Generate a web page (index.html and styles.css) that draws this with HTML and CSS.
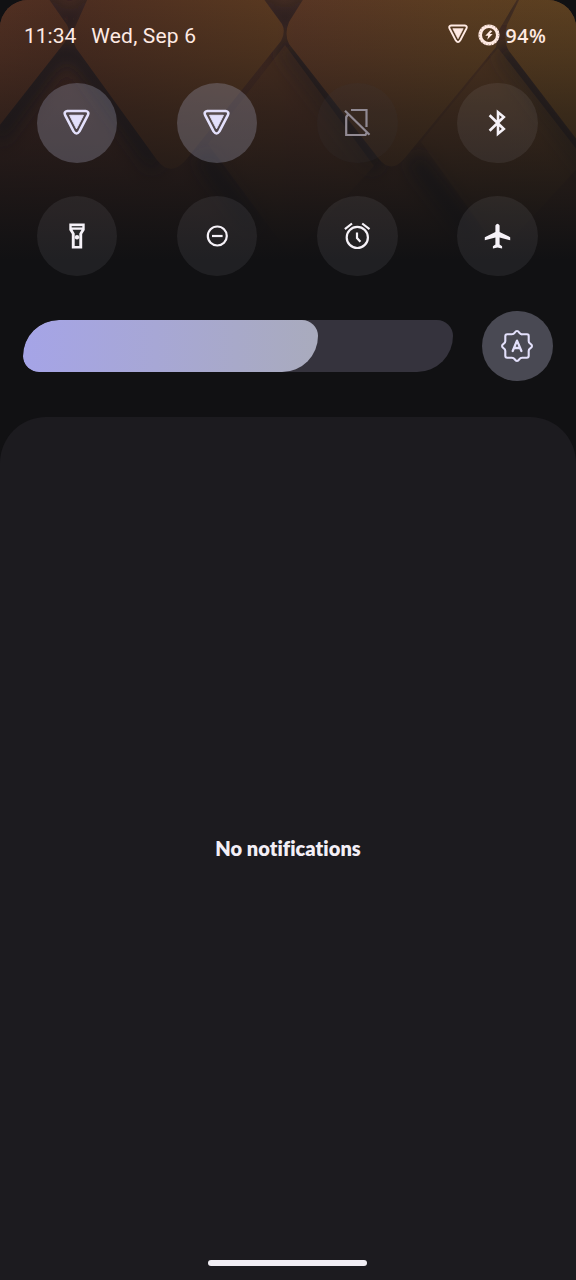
FILE: index.html
```html
<!DOCTYPE html>
<html lang="en">
<head>
<meta charset="utf-8">
<title>Quick settings</title>
<link rel="stylesheet" href="styles.css">
</head>
<body>
<main class="shade">
  <svg class="wallpaper" viewBox="0 0 576 280" aria-hidden="true">
    <defs>
      <linearGradient id="warm" gradientUnits="userSpaceOnUse" x1="0" x2="576" y1="0" y2="0">
        <stop offset="0" stop-color="#482a22"/><stop offset=".48" stop-color="#4d2f24"/><stop offset=".75" stop-color="#523423"/><stop offset="1" stop-color="#543624"/>
      </linearGradient>
      <linearGradient id="diamond" gradientUnits="userSpaceOnUse" x1="0" x2="576" y1="0" y2="0">
        <stop offset="0" stop-color="#5a3424"/><stop offset=".13" stop-color="#543122"/><stop offset=".48" stop-color="#623e22"/><stop offset=".51" stop-color="#603a26"/><stop offset=".8" stop-color="#654323"/><stop offset="1" stop-color="#664622"/>
      </linearGradient>
      <linearGradient id="fade" x1="0" x2="0" y1="0" y2="1">
        <stop offset="0" stop-color="#111113" stop-opacity=".12"/><stop offset=".2" stop-color="#111113" stop-opacity=".3"/><stop offset=".4" stop-color="#111113" stop-opacity=".52"/><stop offset=".6" stop-color="#111113" stop-opacity=".7"/><stop offset=".78" stop-color="#111113" stop-opacity=".87"/><stop offset=".93" stop-color="#111113"/>
      </linearGradient>
      <filter id="soft" x="-30%" y="-30%" width="160%" height="160%"><feGaussianBlur stdDeviation="9"/></filter>
    </defs>
    <rect width="576" height="280" fill="url(#warm)"/>
    <g fill="none" stroke="#1d1b24" stroke-width="20" opacity=".8" filter="url(#soft)">
      <path d="M65 44L-5 138M70 45L158 167M283 45L378 168M501 48L595 175M413 158L475 240M202 155L255 230"/>
      <path d="M46-5L70 28 92-5M262-5L285 26 306-5M512-5L500 25" stroke-width="9"/>
    </g>
    <g fill="url(#diamond)" opacity=".45">
      <path d="M421 142L498 48 585 160 500 252Z"/>
      <path d="M208 144L285 45 374 166 291 256Z"/>
    </g>
    <g fill="url(#diamond)">
      <path d="M-40-5H46L67 25Q71 32 65 42L-12 140-60 80Z"/>
      <path d="M88-2H263L282 24Q286 32 281 41L185 161Q170 177 157 160L76 48Q70 36 76 25Z"/>
      <path d="M304-2H518L499 30 496 47 404 159Q391 174 379 159L289 44Q284 34 289 22Z"/>
      <path d="M520-2H600V170L509 51Q503 42 507 25Z"/>
    </g>
    <rect width="576" height="280" fill="url(#fade)"/>
  </svg>

  <header class="status">
    <span class="clock">11:34</span>
    <span class="date">Wed, Sep 6</span>
    <svg class="status-wifi" viewBox="0 0 28 28"><use href="#wifi"/></svg>
    <svg class="battery" viewBox="0 0 22 22">
      <circle cx="11" cy="11" r="8.8" fill="none" stroke="currentColor" stroke-width="3.6"/>
      <circle cx="11" cy="11" r="9.8" fill="none" stroke="#6b4c3b" stroke-width="1.2" stroke-dasharray=".7 2.4" opacity=".6"/>
      <path d="M12.4 6.2L7.3 11.8H10.2L9.2 15.8 14.7 10.1H11.7L14.3 7.2Z" fill="currentColor"/>
    </svg>
    <span class="percent">94%</span>
  </header>

  <section class="tiles">
    <div class="tile on">
      <svg class="wifi" viewBox="0 0 28 28">
        <g id="wifi"><path d="M4.5 2H23.5Q27.4 2.6 25.8 6.3L17 23.2Q14 27.6 11 23.2L2.2 6.3Q.6 2.6 4.5 2Z" fill="none" stroke="currentColor" stroke-width="2.7" stroke-linejoin="round"/><path d="M6.8 6.5H21.2L14 20.6Z" fill="currentColor" stroke="currentColor" stroke-width="1" stroke-linejoin="round"/></g>
      </svg>
    </div>
    <div class="tile on"><svg class="wifi" viewBox="0 0 28 28"><use href="#wifi"/></svg></div>
    <div class="tile off">
      <svg class="sim" viewBox="0 0 28 30" fill="none" stroke="currentColor" stroke-width="2.2"><path d="M8 2H23.5V19M3.2 8.5V27H22.5L23.5 25M3.2 9L5 6.5M2 2.8L26.5 26.8"/></svg>
    </div>
    <div class="tile">
      <svg viewBox="0 0 28 28" fill="none" stroke="currentColor" stroke-width="2.6"><path d="M6.6 6.2L20.8 20 15 24.8V3.2L20.8 8 6.6 21.8"/></svg>
    </div>
    <div class="tile">
      <svg viewBox="0 0 28 28"><path d="M6.3 1.4H21.7V7.9L19.2 12V26.4H8.8V12L6.3 7.9Z" fill="currentColor"/><path d="M8.7 4.8H19.3" fill="none" stroke="#29292b" stroke-width="1.3"/><path d="M9.5 7.8H18.5L16.3 11.5V24H11.7V11.5Z" fill="#29292b"/><circle cx="14" cy="15.3" r="2.2" fill="currentColor"/></svg>
    </div>
    <div class="tile">
      <svg viewBox="0 0 28 28" fill="none" stroke="currentColor" stroke-width="2.2"><circle cx="14.3" cy="14" r="9.5"/><path d="M9 14H19.6"/></svg>
    </div>
    <div class="tile">
      <svg viewBox="0 0 28 28" fill="none" stroke="currentColor" stroke-width="2.2"><circle cx="14.3" cy="15.4" r="10.6"/><path d="M14 10.4V16L17.4 19.8M1.9 7.2L9 1.5M19.2 1.5L26.5 7.2"/></svg>
    </div>
    <div class="tile">
      <svg viewBox="0 0 28 28" fill="currentColor"><path d="M12.4 3.5Q14.5 .1 16.6 3.5V9.9L27.2 15.2V18.2L16.6 15.6V22.6L19.1 24.3V26.5L14.5 25.5 9.9 26.5V24.3L12.4 22.6V15.6L1.8 18.2V15.2L12.4 9.9Z"/></svg>
    </div>
  </section>

  <section class="brightness">
    <div class="track"><div class="level"></div></div>
    <div class="auto">
      <svg viewBox="0 0 34 34" fill="none" stroke="currentColor" stroke-width="2.1" stroke-linejoin="round" stroke-linecap="round"><path d="M14.6 3.8Q17 .3 19.4 3.8Q20.5 5.6 22.5 5.3H27Q28.8 5.3 28.7 7.2V11.5Q28.5 13.6 30.2 14.6Q33.8 17 30.2 19.4Q28.5 20.5 28.7 22.5V26.8Q28.7 28.7 26.8 28.7H22.5Q20.4 28.5 19.4 30.2Q17 33.8 14.6 30.2Q13.5 28.5 11.5 28.7H7.2Q5.3 28.7 5.3 26.8V22.5Q5.5 20.4 3.8 19.4Q.3 17 3.8 14.6Q5.5 13.5 5.3 11.5V7.2Q5.3 5.3 7.2 5.3H11.5Q13.6 5.5 14.6 3.8Z"/><path d="M12.7 22L17 11.6 21.4 22M14.3 19H19.8" stroke-width="2.3"/></svg>
    </div>
  </section>

  <section class="notifications"><p class="empty">No notifications</p><div class="home-bar"></div></section>
</main>
</body>
</html>
```
FILE: styles.css
```css
* { box-sizing: border-box; }
body { margin: 0; background: #111113; }
.shade {
  position: relative;
  display: flex;
  flex-direction: column;
  width: 576px;
  height: 1280px;
  overflow: hidden;
  background: #111113;
  font-family: Roboto, sans-serif;
}
.wallpaper {
  position: absolute;
  inset: 0 auto auto 0;
  width: 576px;
  height: 280px;
  border-radius: 28px 28px 0 0;
}
.status {
  position: relative;
  display: flex;
  align-items: center;
  height: 72px;
  padding: 0 29px 0 24px;
  color: #ffeae3;
  font-size: 21px;
  line-height: 24px;
}
.date { margin-left: 15px; letter-spacing: .18px; }
.status-wifi { width: 20px; height: 20px; margin: -4px 10px 0 auto; }
.battery { width: 22px; height: 22px; margin: -2px 6px 0 0; }
.percent {
  width: 41.5px;
  margin-top: -1px;
  font: 600 19.5px/24px "Open Sans", sans-serif;
  letter-spacing: .6px;
  white-space: nowrap;
}
.tiles {
  position: relative;
  display: grid;
  grid-template-columns: repeat(4, 80.5px);
  justify-content: space-between;
  row-gap: 32.5px;
  margin-top: 10.6px;
  padding: 0 38.3px 0 36.6px;
}
.tile {
  display: grid;
  place-items: center;
  height: 80.5px;
  border-radius: 50%;
  background: rgba(225, 225, 235, .075);
  color: #f6f2f8;
}
.tile svg { width: 28px; height: 28px; }
.tile .wifi { width: 27px; height: 27px; margin: -1px 0 0 -1px; }
.tile.on { background: rgba(155, 155, 175, .33); color: #e3e0fb; }
.tile.off { background: rgba(60, 60, 72, .13); color: #918a93; }
.tile .sim { width: 28px; height: 30px; }
.brightness {
  display: flex;
  align-items: center;
  justify-content: space-between;
  margin-top: 34.9px;
  padding: 0 23.5px 0 23.3px;
}
.track {
  width: 430px;
  height: 51.5px;
  overflow: hidden;
  border-radius: 36px 16px 36px 16px;
  background: #35333d;
}
.level {
  width: 294.5px;
  height: 100%;
  border-radius: 36px 16px 36px 16px;
  background: linear-gradient(90deg, #a5a4e7, #a7a7d5 45%, #a9abbd);
}
.auto {
  display: grid;
  place-items: center;
  width: 70.5px;
  height: 70.5px;
  border-radius: 50%;
  background: #494953;
  color: #e3e0fb;
}
.auto svg { width: 34px; height: 34px; }
.notifications {
  display: flex;
  flex: 1;
  flex-direction: column;
  align-items: center;
  justify-content: space-between;
  margin-top: 35.5px;
  padding: 417px 0 14.5px;
  border-radius: 46px 46px 0 0;
  background: #1c1b1f;
}
.empty {
  margin: 0;
  color: #f3eff6;
  font: 800 20px/28px Lato, sans-serif;
  letter-spacing: .05px;
}
.home-bar { width: 159px; height: 6px; margin-right: 1px; border-radius: 3px; background: #f1eef4; }
```
